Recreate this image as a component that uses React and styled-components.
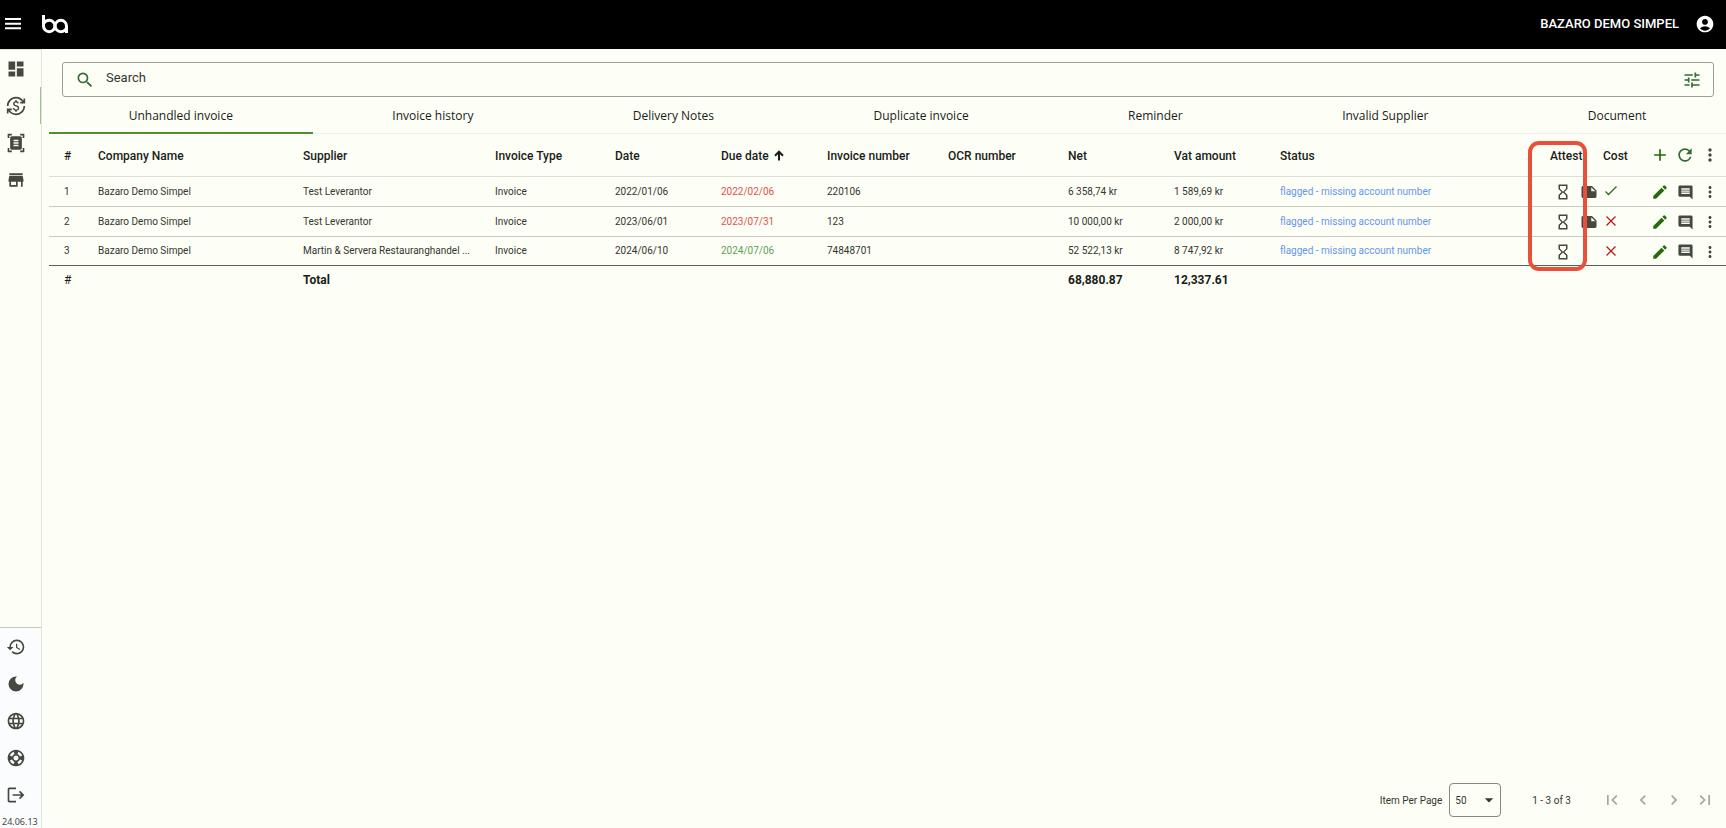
import React from "react";
import styled, { createGlobalStyle, css } from "styled-components";
import {
  MdDashboard, MdCurrencyExchange, MdDocumentScanner, MdStore, MdHistory, MdDarkMode, MdLanguage,
  MdSupport, MdLogout, MdAccountCircle, MdTune, MdSearch, MdAdd, MdRefresh, MdMoreVert,
  MdHourglassEmpty, MdNote, MdEdit, MdComment, MdFirstPage, MdChevronLeft,
  MdChevronRight, MdLastPage, MdArrowDropDown,
} from "react-icons/md";

const GlobalStyle = createGlobalStyle`
  *, *::before, *::after { box-sizing: border-box; }
  body {
    margin: 0;
    background: #fdfff7;
    color: #1a1c18;
    font-family: Roboto, "Liberation Sans", sans-serif;
    font-size: 12px;
  }
  button, input, select { font: inherit; color: inherit; }
`;

const Page = styled.div`
  display: flex;
  flex-direction: column;
  min-height: 100vh;
`;

const TopBar = styled.header`
  display: flex;
  align-items: center;
  height: 49px;
  padding: 0 11px 2px 3px;
  background: #000;
  color: #fff;
`;

const IconButton = styled.button`
  display: inline-flex;
  align-items: center;
  justify-content: center;
  flex: none;
  width: 20px;
  height: 20px;
  padding: 0;
  border: 0;
  background: none;
  color: ${(p) => p.$color || "inherit"};
  cursor: pointer;
`;

const LogoLink = styled.a`
  display: flex;
  margin-left: 18px;
  color: inherit;
`;

const Account = styled.span`
  margin-left: auto;
  margin-right: 16px;
  font-size: 13px;
  font-weight: 500;
`;

const Body = styled.div`
  display: flex;
  flex: 1;
`;

const Sidebar = styled.aside`
  display: flex;
  flex-direction: column;
  justify-content: space-between;
  flex: none;
  width: 42px;
  border-top: 1px solid #e2e4dc;
  border-right: 1px solid #e2e4dc;
  color: #44483e;
`;

const NavGroup = styled.nav`
  display: flex;
  flex-direction: column;
  ${(p) => p.$footer && css`
    border-top: 1px solid #c4c8ba;
    background: #fbfcfd;
  `}
`;

const NavItem = styled.button`
  display: flex;
  align-items: center;
  height: 37px;
  padding: 0 0 0 6px;
  border: 0;
  border-right: 1px solid ${(p) => (p.$active ? "#a0c08e" : "transparent")};
  background: none;
  cursor: pointer;
`;

const Version = styled.small`
  padding: 3px 0 0 2px;
  font: 9px/12px "Noto Sans", sans-serif;
`;

const Main = styled.main`
  display: flex;
  flex-direction: column;
  flex: 1;
  min-width: 0;
  padding-left: 7px;
`;

const SearchBox = styled.label`
  display: flex;
  align-items: center;
  height: 35px;
  margin: 13px 12px 0 13px;
  padding: 0 11px 0 12px;
  border: 1px solid #9c9f96;
  border-radius: 3px;
  color: #2f6b32;
`;

const SearchInput = styled.input`
  flex: 1;
  min-width: 0;
  margin: 0 11px;
  padding: 0 0 4px;
  border: 0;
  outline: 0;
  background: none;
  color: #44483e;
  font-size: 13px;
  &::placeholder { color: #33362f; opacity: 1; }
`;

const Tabs = styled.div`
  display: flex;
  height: 37px;
  border-bottom: 1px solid #f0f2ea;
`;

const Tab = styled.button`
  flex: 1 1 auto;
  margin-bottom: -1px;
  padding: 2px 0 0;
  border: 0;
  border-bottom: 2px solid ${(p) => (p.$active ? "#4f8f35" : "transparent")};
  background: none;
  font: 500 12px "Open Sans", "Noto Sans", sans-serif;
  cursor: pointer;
`;

const TableArea = styled.section`
  position: relative;
`;

const Table = styled.table`
  width: 100%;
  table-layout: fixed;
  border-collapse: collapse;
  text-align: left;
`;

const Col = styled.col`
  width: ${(p) => p.$w}px;
`;

const HeadCell = styled.th`
  height: 42px;
  padding: ${(p) => (p.$actions ? 0 : 2)}px 0 0 ${(p) => (p.$pad === undefined ? 15 : p.$pad)}px;
  font-size: 12px;
  font-weight: 500;
  white-space: nowrap;
  border-bottom: 1px solid #dddfd7;
`;

const SortArrow = styled.svg`
  margin-left: 2px;
  vertical-align: -1px;
`;

const Cell = styled.td`
  height: 30px;
  padding: 0 0 0 ${(p) => (p.$pad === undefined ? 15 : p.$pad)}px;
  font-size: 10px;
  color: ${(p) => p.$color || "#33362f"};
  white-space: nowrap;
  border-bottom: 1px solid #c8cbc1;
  tr:last-child > & {
    height: 29px;
    border-bottom-color: #5c5f57;
  }
`;

const TotalCell = styled.td`
  height: 30px;
  padding: 0 0 0 15px;
  font-size: 12px;
  font-weight: ${(p) => (p.$strong ? 700 : 400)};
`;

const Icons = styled.div`
  display: flex;
  align-items: center;
  gap: ${(p) => p.$gap || 5}px;
  padding-top: ${(p) => p.$drop || 0}px;
  color: #44483e;
`;

const Highlight = styled.div`
  position: absolute;
  top: 7px;
  right: 139px;
  width: 59px;
  height: 130px;
  border: 4px solid #e8503a;
  border-radius: 11px;
  pointer-events: none;
`;

const Footer = styled.footer`
  display: flex;
  align-items: center;
  justify-content: flex-end;
  margin-top: auto;
  padding: 0 11px 11px 0;
  font-size: 10px;
  color: #33362f;
`;

const PageSize = styled.span`
  position: relative;
  display: flex;
  align-items: center;
  margin: 0 31px 0 7px;
  svg { position: absolute; right: 2px; pointer-events: none; }
`;

const Select = styled.select`
  width: 52px;
  height: 34px;
  padding: 0 5px;
  appearance: none;
  border: 1px solid #85887f;
  border-radius: 4px;
  background: none;
`;

const Pager = styled.div`
  display: flex;
  gap: 11px;
  margin-left: 31px;
  color: #a3a69d;
`;

function MenuGlyph() {
  return (
    <svg width="16" height="12" viewBox="0 0 16 12" fill="currentColor" aria-hidden="true">
      <path d="M0 0h16v2H0zM0 4.700h16v2H0zM0 9.300h16v2H0z" />
    </svg>
  );
}

function Logo() {
  return (
    <svg width="28" height="20" viewBox="0 0 28 20" fill="none" stroke="currentColor" strokeWidth="3" aria-hidden="true">
      <path d="M2.500 1v11a5.700 5.700 0 1 0 5.700-5.700c-2.400 0-4 1-5.300 2.800" />
      <path d="M25.500 19v-7a5.700 5.700 0 1 0-5.700 5.700c2.400 0 4-1 5.300-2.800" />
    </svg>
  );
}

function CheckGlyph() {
  return (
    <svg width="16" height="16" viewBox="0 0 16 16" fill="none" stroke="#2f6b1c" strokeWidth="1.300" aria-label="Yes">
      <path d="M2.500 8.500l3 3 8-8" />
    </svg>
  );
}

function CrossGlyph() {
  return (
    <svg width="16" height="16" viewBox="0 0 16 16" fill="none" stroke="#ba1a1a" strokeWidth="1.300" aria-label="No">
      <path d="M3.500 3.500l9 9M12.500 3.500l-9 9" />
    </svg>
  );
}

const mainNav = [
  ["Dashboard", MdDashboard],
  ["Invoices", MdCurrencyExchange],
  ["Scan documents", MdDocumentScanner],
  ["Store", MdStore],
];
const footerNav = [
  ["History", MdHistory],
  ["Dark mode", MdDarkMode],
  ["Language", MdLanguage],
  ["Support", MdSupport],
  ["Log out", MdLogout],
];
const tabs = ["Unhandled invoice", "Invoice history", "Delivery Notes", "Duplicate invoice", "Reminder", "Invalid Supplier", "Document"];
const columnWidths = [34, 205, 192, 120, 106, 106, 121, 120, 106, 106, 270, 65, 35, 91];
const headings = ["#", "Company Name", "Supplier", "Invoice Type", "Date", "Due date", "Invoice number", "OCR number", "Net", "Vat amount", "Status", "Attest"];
const RED = "#e2504a";
const GREEN = "#5f9e57";
const rows = [
  { supplier: "Test Leverantor", date: "2022/01/06", due: "2022/02/06", dueColor: RED, number: "220106", net: "6 358,74 kr", vat: "1 589,69 kr", note: true, cost: true },
  { supplier: "Test Leverantor", date: "2023/06/01", due: "2023/07/31", dueColor: RED, number: "123", net: "10 000,00 kr", vat: "2 000,00 kr", note: true, cost: false },
  { supplier: "Martin & Servera Restauranghandel ...", date: "2024/06/10", due: "2024/07/06", dueColor: GREEN, number: "74848701", net: "52 522,13 kr", vat: "8 747,92 kr", note: false, cost: false },
];

function InvoiceRow({ index, row }) {
  return (
    <tr>
      <Cell>{index}</Cell>
      <Cell>Bazaro Demo Simpel</Cell>
      <Cell>{row.supplier}</Cell>
      <Cell>Invoice</Cell>
      <Cell>{row.date}</Cell>
      <Cell $color={row.dueColor}>{row.due}</Cell>
      <Cell>{row.number}</Cell>
      <Cell />
      <Cell>{row.net}</Cell>
      <Cell>{row.vat}</Cell>
      <Cell $color="#6495ed">flagged - missing account number</Cell>
      <Cell $pad={19}>
        <Icons $gap={8} $drop={2}>
          <MdHourglassEmpty size={18} />
          {row.note && <MdNote size={18} />}
        </Icons>
      </Cell>
      <Cell $pad={3}>
        <Icons>{row.cost ? <CheckGlyph /> : <CrossGlyph />}</Icons>
      </Cell>
      <Cell $pad={15}>
        <Icons $drop={2}>
          <IconButton $color="#266b0a" aria-label="Edit invoice"><MdEdit size={18} /></IconButton>
          <IconButton aria-label="Comments"><MdComment size={17} /></IconButton>
          <IconButton aria-label="More actions"><MdMoreVert size={18} /></IconButton>
        </Icons>
      </Cell>
    </tr>
  );
}

export default function App() {
  return (
    <Page>
      <GlobalStyle />
      <TopBar>
        <IconButton aria-label="Menu"><MenuGlyph /></IconButton>
        <LogoLink href="#" aria-label="Home"><Logo /></LogoLink>
        <Account>BAZARO DEMO SIMPEL</Account>
        <IconButton aria-label="Account"><MdAccountCircle size={20} /></IconButton>
      </TopBar>
      <Body>
        <Sidebar>
          <NavGroup>
            {mainNav.map(([label, Icon], i) => (
              <NavItem key={label} aria-label={label} $active={i === 1}><Icon size={20} /></NavItem>
            ))}
          </NavGroup>
          <NavGroup $footer>
            {footerNav.map(([label, Icon]) => (
              <NavItem key={label} aria-label={label}><Icon size={20} /></NavItem>
            ))}
            <Version>24.06.13</Version>
          </NavGroup>
        </Sidebar>
        <Main>
          <SearchBox>
            <MdSearch size={20} />
            <SearchInput placeholder="Search" aria-label="Search" />
            <IconButton aria-label="Filters"><MdTune size={20} /></IconButton>
          </SearchBox>
          <Tabs role="tablist">
            {tabs.map((name, i) => (
              <Tab key={name} role="tab" aria-selected={i === 0} $active={i === 0}>{name}</Tab>
            ))}
          </Tabs>
          <TableArea>
            <Table>
              <colgroup>{columnWidths.map((w, i) => <Col key={i} $w={w} />)}</colgroup>
              <thead>
                <tr>
                  {headings.map((name) => (
                    <HeadCell key={name} scope="col">
                      {name}
                      {name === "Due date" && (
                        <>
                          {" "}
                          <SortArrow width="10" height="11" viewBox="0 0 10 11" fill="none" stroke="currentColor" strokeWidth="2" aria-hidden="true">
                            <path d="M5 10.500V2M1 5.700l4-4 4 4" />
                          </SortArrow>
                        </>
                      )}
                    </HeadCell>
                  ))}
                  <HeadCell scope="col" $pad={3}>Cost</HeadCell>
                  <HeadCell $actions>
                    <Icons>
                      <IconButton $color="#266b0a" aria-label="Add invoice"><MdAdd size={20} /></IconButton>
                      <IconButton $color="#2f6b32" aria-label="Refresh"><MdRefresh size={20} /></IconButton>
                      <IconButton aria-label="Table options"><MdMoreVert size={20} /></IconButton>
                    </Icons>
                  </HeadCell>
                </tr>
              </thead>
              <tbody>
                {rows.map((row, i) => <InvoiceRow key={row.number} index={i + 1} row={row} />)}
              </tbody>
              <tfoot>
                <tr>
                  <TotalCell>#</TotalCell>
                  <TotalCell />
                  <TotalCell $strong colSpan={6}>Total</TotalCell>
                  <TotalCell $strong>68,880.87</TotalCell>
                  <TotalCell $strong>12,337.61</TotalCell>
                  <TotalCell colSpan={4} />
                </tr>
              </tfoot>
            </Table>
            <Highlight />
          </TableArea>
          <Footer>
            <label htmlFor="page-size">Item Per Page</label>
            <PageSize>
              <Select id="page-size" defaultValue="50">
                <option>25</option>
                <option>50</option>
                <option>100</option>
              </Select>
              <MdArrowDropDown size={20} />
            </PageSize>
            <span>1 - 3 of 3</span>
            <Pager>
              <IconButton aria-label="First page"><MdFirstPage size={20} /></IconButton>
              <IconButton aria-label="Previous page"><MdChevronLeft size={20} /></IconButton>
              <IconButton aria-label="Next page"><MdChevronRight size={20} /></IconButton>
              <IconButton aria-label="Last page"><MdLastPage size={20} /></IconButton>
            </Pager>
          </Footer>
        </Main>
      </Body>
    </Page>
  );
}
